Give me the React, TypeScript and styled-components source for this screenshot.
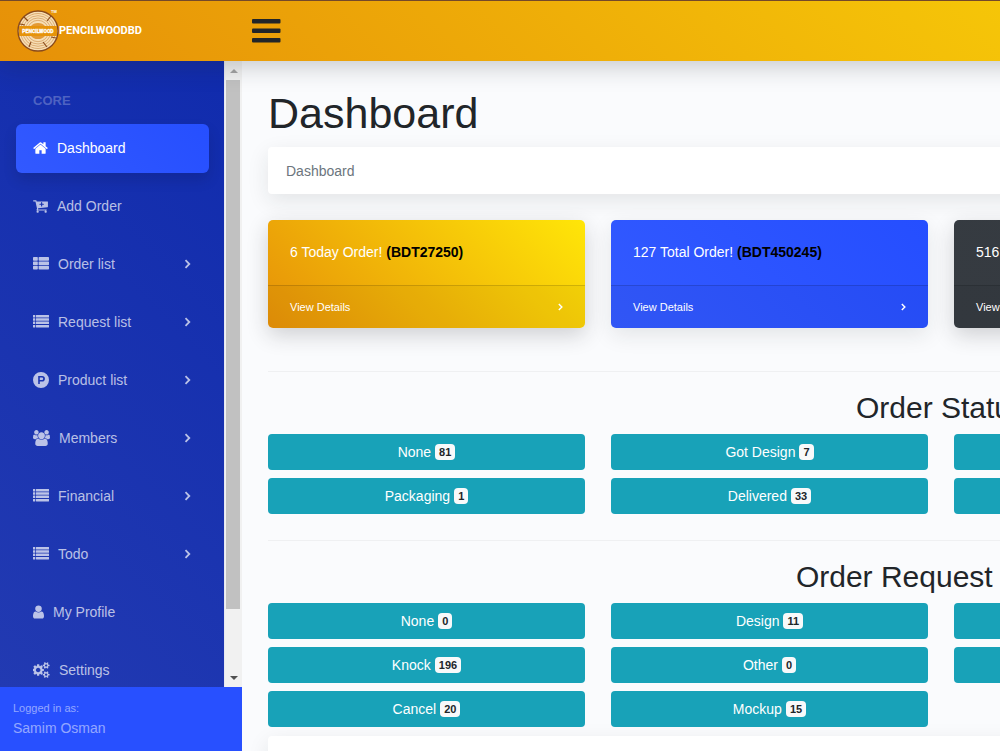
import React from "react";
import styled, { createGlobalStyle } from "styled-components";

const GlobalStyle = createGlobalStyle`
  *, *::before, *::after { box-sizing: border-box; }
  html, body, #root { height: 100%; }
  body {
    margin: 0;
    overflow: hidden;
    background: #fafbfd;
    color: #212529;
    font-family: "Liberation Sans", Arial, sans-serif;
    font-size: 14px;
    line-height: 22px;
  }
  h1, h2, p, ul, ol { margin: 0; padding: 0; font-weight: 400; }
  ul, ol { list-style: none; }
  a { color: inherit; text-decoration: none; }
  button { font: inherit; border: 0; padding: 0; cursor: pointer; }
`;

const Page = styled.div`
  display: flex;
  flex-direction: column;
  height: 100vh;
  overflow: hidden;
`;

const TopBar = styled.header`
  position: relative;
  z-index: 2;
  flex: none;
  display: flex;
  align-items: center;
  min-width: 1640px;
  height: 61px;
  padding-left: 16px;
  border-top: 1px solid #74492a;
  background: linear-gradient(45deg, #e69008, #ffe608);
  box-shadow: 0 4px 26px rgba(33, 37, 41, 0.26);
`;

const Brand = styled.a`
  display: flex;
  align-items: center;
  width: 236px;
  color: #fff;
  font-family: Roboto, sans-serif;
  font-size: 11px;
  font-weight: 700;
`;

const MenuButton = styled.button`
  display: flex;
  background: none;
  color: #212529;
`;

const Body = styled.div`
  flex: 1;
  display: flex;
  min-height: 0;
`;

const Sidebar = styled.aside`
  flex: none;
  display: flex;
  flex-direction: column;
  width: 242px;
`;

const SideScroll = styled.div`
  flex: 1;
  display: flex;
  min-height: 0;
  background: linear-gradient(45deg, #223ab2, #102bad);
`;

const Nav = styled.nav`
  flex: 1;
  overflow: hidden;
  padding: 29px 15px 0 16px;
`;

const NavHeading = styled.p`
  padding-left: 17px;
  margin-bottom: 12px;
  color: rgba(255, 255, 255, 0.25);
  font-size: 13px;
  font-weight: 700;
`;

const NavList = styled.ul`
  display: grid;
  gap: 9px;
`;

const NavLink = styled.a<{ $active?: boolean }>`
  display: flex;
  align-items: center;
  gap: 9px;
  height: 49px;
  padding: 0 17px 2px;
  border-radius: 6px;
  color: ${(p) => (p.$active ? "#fff" : "rgba(255, 255, 255, 0.7)")};
  background: ${(p) => (p.$active ? "linear-gradient(45deg, #3259ff, #264fff)" : "none")};
  box-shadow: ${(p) => (p.$active ? "0 7px 14px rgba(0, 0, 0, 0.12)" : "none")};

  & > :last-child:not(span) { margin-left: auto; }
`;

const ScrollBar = styled.div`
  flex: none;
  display: flex;
  flex-direction: column;
  width: 18px;
  border-left: 1px solid #e6e8f2;
  background: #f1f1f1;
`;

const ScrollArrow = styled.button`
  display: flex;
  align-items: center;
  justify-content: center;
  height: 19px;
  background: none;
`;

const ScrollTrack = styled.div`
  flex: 1;
  padding: 0 2px 0 1px;
`;

const ScrollThumb = styled.div`
  height: 90%;
  background: #c1c1c1;
`;

const SideFooter = styled.div`
  flex: none;
  height: 64px;
  padding: 11px 13px;
  background: #2850ff;
  color: rgba(255, 255, 255, 0.5);
  line-height: 20px;
`;

const Small = styled.span`
  display: block;
  font-size: 11px;
`;

const Main = styled.main`
  flex: 1;
  min-width: 0;
  overflow: hidden;
  padding: 26px 26px 0;
`;

const Content = styled.div`
  min-width: 1346px;
`;

const Title = styled.h1`
  margin-bottom: 8px;
  font-size: 43px;
  line-height: 52px;
`;

const Breadcrumb = styled.ol`
  display: flex;
  align-items: center;
  height: 47px;
  margin-bottom: 26px;
  padding: 0 18px;
  border-radius: 4px;
  background: #fff;
  color: #6c757d;
  box-shadow: 0 7px 21px rgba(33, 37, 41, 0.1);
`;

const Grid = styled.div`
  display: grid;
  grid-template-columns: repeat(4, minmax(0, 1fr));
  column-gap: 26px;
  row-gap: 8px;
`;

const tones = {
  warning: "linear-gradient(45deg, #e69008, #ffe608)",
  primary: "linear-gradient(45deg, #335aff, #254eff)",
  dark: "linear-gradient(45deg, #363b41, #343a40)",
};

type Tone = keyof typeof tones;

const Card = styled.section<{ $tone: Tone }>`
  overflow: hidden;
  border-radius: 5px;
  color: #fff;
  background: ${(p) => tones[p.$tone]};
  box-shadow: 0 7px 21px ${(p) => (p.$tone === "primary" ? "rgba(33, 37, 41, 0.1)" : "rgba(33, 37, 41, 0.2)")};
`;

const CardBody = styled.p`
  padding: 21px 22px 22px;

  b { color: #000; }
`;

const CardLink = styled.a`
  display: flex;
  align-items: center;
  justify-content: space-between;
  height: 43px;
  padding: 0 21px 0 22px;
  border-top: 1px solid rgba(0, 0, 0, 0.14);
  background: rgba(0, 0, 0, 0.04);
  font-size: 11px;
`;

const Divider = styled.hr<{ $top: number }>`
  margin: ${(p) => p.$top}px 0 18px;
  border: 0;
  border-top: 1px solid #eff0f2;
`;

const SectionTitle = styled.h2`
  margin-bottom: 8px;
  font-size: 30px;
  line-height: 36px;
  text-align: center;
`;

const StatusButton = styled.button`
  display: flex;
  align-items: center;
  justify-content: center;
  gap: 4px;
  height: 36px;
  border-radius: 4px;
  background: #18a2b8;
  color: #fff;
`;

const Badge = styled.span`
  padding: 0 4px;
  border-radius: 4px;
  background: #f8f9fa;
  color: #212529;
  font-size: 11px;
  font-weight: 700;
  line-height: 16px;
`;

const Panel = styled.section`
  height: 300px;
  margin-top: 9px;
  border-radius: 4px;
  background: #fff;
  box-shadow: 0 7px 21px rgba(33, 37, 41, 0.1);
`;

const Glyph = ({ d, x = 0, w }: { d: string; x?: number; w: number }) => (
  <svg width={Math.round(w / 112)} height="16" viewBox={`${x} 0 ${w} 1792`} fill="currentColor" aria-hidden="true">
    <path d={d} />
  </svg>
);

const HomeIcon = () => (
  <Glyph
    x={64}
    w={1664}
    d="M1472 992v480q0 26-19 45t-45 19h-384v-384h-256v384h-384q-26 0-45-19t-19-45v-480q0-1 .5-3t.5-3l575-474 575 474q1 2 1 6zm223-69l-62 74q-8 9-21 11h-3q-13 0-21-7l-692-577-692 577q-12 8-24 7-13-2-21-11l-62-74q-8-10-7-23.5t11-21.5l719-599q32-26 76-26t76 26l244 204v-195q0-14 9-23t23-9h192q14 0 23 9t9 23v408l219 182q10 8 11 21.5t-7 23.5z"
  />
);

const CartIcon = () => (
  <Glyph
    x={64}
    w={1664}
    d="M1280 704q0-26-19-45t-45-19h-128v-128q0-26-19-45t-45-19-45 19-19 45v128h-128q-26 0-45 19t-19 45 19 45 45 19h128v128q0 26 19 45t45 19 45-19 19-45v-128h128q26 0 45-19t19-45zm-576 832q0 53-37.500 90.500t-90.500 37.500-90.500-37.500-37.500-90.500 37.500-90.500 90.500-37.500 90.500 37.500 37.500 90.500zm896 0q0 53-37.500 90.500t-90.500 37.500-90.500-37.500-37.500-90.500 37.500-90.500 90.500-37.500 90.500 37.500 37.500 90.500zm128-1088v512q0 24-16 42.500t-41 21.500l-1044 122q1 7 4.500 21.500t6 26.500 2.500 22q0 16-24 64h920q26 0 45 19t19 45-19 45-45 19h-1024q-26 0-45-19t-19-45q0-14 11-39.500t29.500-59.500 20.500-38l-177-823h-204q-26 0-45-19t-19-45 19-45 45-19h256q16 0 28.500 6.500t20 15.500 13 24.500 7.500 26.500 5.500 29.500 4.500 25.500h1201q26 0 45 19t19 45z"
  />
);

const UsersIcon = () => (
  <Glyph
    x={-64}
    w={1920}
    d="M529 896q-162 5-265 128h-134q-82 0-138-40.500t-56-118.500q0-353 124-353 6 0 43.500 21t97.500 42.500 119 21.500q67 0 133-23-5 37-5 66 0 139 81 256zm1071 637q0 120-73 189.500t-194 69.500h-874q-121 0-194-69.500t-73-189.500q0-53 3.500-103.500t14-109 26.500-108.500 43-97.500 62-81 85.500-53.500 111.500-20q10 0 43 21.500t73 48 107 48 135 21.500 135-21.500 107-48 73-48 43-21.500q61 0 111.500 20t85.500 53.500 62 81 43 97.500 26.500 108.500 14 109 3.500 103.500zm-1024-1277q0 106-75 181t-181 75-181-75-75-181 75-181 181-75 181 75 75 181zm704 384q0 159-112.500 271.500t-271.500 112.500-271.500-112.500-112.500-271.500 112.500-271.500 271.500-112.500 271.500 112.500 112.500 271.500zm576 225q0 78-56 118.500t-138 40.500h-134q-103-123-265-128 81-117 81-256 0-29-5-66 66 23 133 23 59 0 119-21.500t97.500-42.500 43.500-21q124 0 124 353zm-128-609q0 106-75 181t-181 75-181-75-75-181 75-181 181-75 181 75 75 181z"
  />
);

const UserIcon = () => (
  <Glyph
    x={256}
    w={1280}
    d="M1536 1399q0 109-62.500 187t-150.500 78h-854q-88 0-150.500-78t-62.500-187q0-85 8.500-160.500t31.500-152 58.500-131 94-89 134.500-34.500q131 128 313 128t313-128q76 0 134.500 34.500t94 89 58.500 131 31.500 152 8.500 160.500zm-256-887q0 159-112.500 271.500t-271.500 112.500-271.500-112.500-112.500-271.500 112.500-271.500 271.500-112.500 271.500 112.500 112.500 271.500z"
  />
);

const smallCog =
  "v140q0 16-149 31-12 27-30 52 51 113 51 138 0 4-4 7-122 71-124 71-8 0-46-47t-52-68q-20 2-30 2t-30-2q-14 21-52 68t-46 47q-2 0-124-71-4-3-4-7 0-25 51-138-18-25-30-52-149-15-149-31v-140q0-16 149-31 13-29 30-52-51-113-51-138 0-4 4-7 4-2 35-20t59-34 30-16q8 0 46 46.500t52 67.500q20-2 30-2t30 2q51-71 92-112l6-2q4 0 124 70 4 3 4 7 0 25-51 138 17 23 30 52 149 15 149 31z";

const CogsIcon = () => (
  <Glyph
    w={1904}
    d={
      "M832 896q0-106-75-181t-181-75-181 75-75 181 75 181 181 75 181-75 75-181zm768 512q0-52-38-90t-90-38-90 38-38 90q0 53 37.500 90.500t90.500 37.500 90.500-37.500 37.500-90.500zm0-1024q0-52-38-90t-90-38-90 38-38 90q0 53 37.500 90.500t90.500 37.500 90.500-37.500 37.500-90.500zm-384 421v185q0 10-7 19.500t-16 10.500l-155 24q-11 35-32 76 34 48 90 115 7 11 7 20 0 12-7 19-23 30-82.500 89.500t-78.500 59.500q-11 0-21-7l-115-90q-37 19-77 31-11 108-23 155-7 24-30 24h-186q-11 0-20-7.500t-10-17.500l-23-153q-34-10-75-31l-118 89q-7 7-20 7-11 0-21-8-144-133-144-160 0-9 7-19 10-14 41-53t47-61q-23-44-35-82l-152-24q-10-1-17-9.500t-7-19.500v-185q0-10 7-19.500t16-10.500l155-24q11-35 32-76-34-48-90-115-7-11-7-20 0-12 7-20 22-30 82-89t79-59q11 0 21 7l115 90q34-18 77-32 11-108 23-154 7-24 30-24h186q11 0 20 7.500t10 17.500l23 153q34 10 75 31l118-89q8-7 20-7 11 0 21 8 144 133 144 160 0 8-7 19-12 16-42 54t-45 60q23 48 34 82l152 23q10 2 17 10.500t7 19.500zm640 533" +
      smallCog +
      "m0-1024" +
      smallCog
    }
  />
);

const ThListIcon = () => (
  <svg width="16" height="16" viewBox="0 0 16 16" fill="currentColor" aria-hidden="true">
    {[1, 5.4, 9.8].map((y) => (
      <React.Fragment key={y}>
        <rect x="0" y={y} width="4.8" height="3.7" rx="0.7" />
        <rect x="5.6" y={y} width="10.4" height="3.7" rx="0.7" />
      </React.Fragment>
    ))}
  </svg>
);

const ListIcon = () => (
  <svg width="16" height="16" viewBox="0 0 16 16" fill="currentColor" aria-hidden="true">
    {[1, 4.3, 7.6, 10.9].map((y) => (
      <React.Fragment key={y}>
        <rect x="0" y={y} width="2.3" height="2.5" rx="0.3" />
        <rect x="3" y={y} width="13" height="2.5" rx="0.3" />
      </React.Fragment>
    ))}
  </svg>
);

const ProductIcon = () => (
  <svg width="16" height="16" viewBox="0 0 16 16" aria-hidden="true">
    <path
      fill="currentColor"
      fillRule="evenodd"
      d="M8 0a8 8 0 1 1 0 16A8 8 0 0 1 8 0zM5.200 4v8h1.600V9.600h2.300a2.800 2.800 0 0 0 0-5.600zM6.800 5.600h2.200a1.200 1.200 0 0 1 0 2.400H6.800z"
    />
  </svg>
);

const Chevron = ({ size = 10 }: { size?: number }) => (
  <svg width={size} height={size} viewBox="0 0 10 10" fill="none" stroke="currentColor" strokeWidth="1.800" aria-hidden="true">
    <path d="M3.500 1.200L7.300 5L3.500 8.800" />
  </svg>
);

const Logo = () => (
  <svg width="43" height="44" viewBox="0 0 43 44" aria-hidden="true">
    <circle cx="22" cy="22" r="20" fill="#f7dfb6" stroke="#8a4b1c" strokeWidth="1.400" />
    <g fill="none" stroke="#c98a45" strokeWidth="0.600">
      <circle cx="22" cy="22" r="17.500" />
      <circle cx="22" cy="22" r="15.300" />
      <circle cx="22" cy="22" r="13" />
      <circle cx="22" cy="22" r="10.700" />
    </g>
    <g stroke="#8a4b1c" strokeWidth="1.200" fill="none">
      <path d="M8 8l4 4M35 7l-4 5M13 38l2-5M31 38l-4-5M4 15l5 1M40 29l-5-1" />
    </g>
    <path d="M15 17a8 6 0 0 1 14 0zM15 27a8 6 0 0 0 14 0z" fill="#e39a35" />
    <rect x="3" y="17" width="38" height="10" fill="#e6930a" />
    <text x="22" y="24" textAnchor="middle" fontSize="5" fontWeight="700" fill="#fff" stroke="#fff" strokeWidth="0.300" fontFamily="Roboto, sans-serif">
      PENCILWOOD
    </text>
    <text x="35" y="4" fontSize="4" fontWeight="700" fill="#fff" fontFamily="Liberation Sans, sans-serif">
      TM
    </text>
  </svg>
);

const navItems = [
  { label: "Dashboard", icon: HomeIcon, active: true },
  { label: "Add Order", icon: CartIcon },
  { label: "Order list", icon: ThListIcon, expands: true },
  { label: "Request list", icon: ListIcon, expands: true },
  { label: "Product list", icon: ProductIcon, expands: true },
  { label: "Members", icon: UsersIcon, expands: true },
  { label: "Financial", icon: ListIcon, expands: true },
  { label: "Todo", icon: ListIcon, expands: true },
  { label: "My Profile", icon: UserIcon },
  { label: "Settings", icon: CogsIcon },
];

const cards: { tone: Tone; text: string; amount?: string }[] = [
  { tone: "warning", text: "6 Today Order!", amount: "(BDT27250)" },
  { tone: "primary", text: "127 Total Order!", amount: "(BDT450245)" },
  { tone: "dark", text: "516" },
];

type Status = { label: string; count?: number };

const orderStatus: Status[] = [
  { label: "None", count: 81 },
  { label: "Got Design", count: 7 },
  { label: "" },
  { label: "" },
  { label: "Packaging", count: 1 },
  { label: "Delivered", count: 33 },
  { label: "" },
];

const requestStatus: Status[] = [
  { label: "None", count: 0 },
  { label: "Design", count: 11 },
  { label: "" },
  { label: "" },
  { label: "Knock", count: 196 },
  { label: "Other", count: 0 },
  { label: "" },
  { label: "" },
  { label: "Cancel", count: 20 },
  { label: "Mockup", count: 15 },
];

const StatusGrid = ({ items }: { items: Status[] }) => (
  <Grid>
    {items.map((item, i) => (
      <StatusButton key={i} type="button">
        {item.label}
        {item.count !== undefined && <Badge>{item.count}</Badge>}
      </StatusButton>
    ))}
  </Grid>
);

export default function App() {
  return (
    <Page>
      <GlobalStyle />
      <TopBar>
        <Brand href="#">
          <Logo />
          PENCILWOODBD
        </Brand>
        <MenuButton type="button" aria-label="Toggle sidebar">
          <svg width="29" height="24" viewBox="0 0 29 24" fill="currentColor" aria-hidden="true">
            <rect y="0" width="28.500" height="4.600" rx="1" />
            <rect y="9.500" width="28.500" height="4.600" rx="1" />
            <rect y="19" width="28.500" height="4.600" rx="1" />
          </svg>
        </MenuButton>
      </TopBar>
      <Body>
        <Sidebar>
          <SideScroll>
            <Nav>
              <NavHeading>CORE</NavHeading>
              <NavList>
                {navItems.map(({ label, icon: Icon, active, expands }) => (
                  <li key={label}>
                    <NavLink href="#" $active={active}>
                      <Icon />
                      <span>{label}</span>
                      {expands && <Chevron />}
                    </NavLink>
                  </li>
                ))}
              </NavList>
            </Nav>
            <ScrollBar>
              <ScrollArrow type="button" aria-label="Scroll up">
                <svg width="8" height="4" viewBox="0 0 8 4" fill="#a3a3a3"><path d="M0 4l4-4 4 4z" /></svg>
              </ScrollArrow>
              <ScrollTrack>
                <ScrollThumb />
              </ScrollTrack>
              <ScrollArrow type="button" aria-label="Scroll down">
                <svg width="8" height="4" viewBox="0 0 8 4" fill="#505050"><path d="M0 0l4 4 4-4z" /></svg>
              </ScrollArrow>
            </ScrollBar>
          </SideScroll>
          <SideFooter>
            <Small>Logged in as:</Small>
            Samim Osman
          </SideFooter>
        </Sidebar>
        <Main>
          <Content>
            <Title>Dashboard</Title>
            <Breadcrumb>
              <li>Dashboard</li>
            </Breadcrumb>
            <Grid>
              {cards.map((card) => (
                <Card key={card.tone} $tone={card.tone}>
                  <CardBody>
                    {card.text} {card.amount && <b>{card.amount}</b>}
                  </CardBody>
                  <CardLink href="#">
                    View Details
                    <Chevron size={8} />
                  </CardLink>
                </Card>
              ))}
            </Grid>
            <Divider $top={43} />
            <SectionTitle>Order Status</SectionTitle>
            <StatusGrid items={orderStatus} />
            <Divider $top={26} />
            <SectionTitle>Order Request Status</SectionTitle>
            <StatusGrid items={requestStatus} />
            <Panel />
          </Content>
        </Main>
      </Body>
    </Page>
  );
}
